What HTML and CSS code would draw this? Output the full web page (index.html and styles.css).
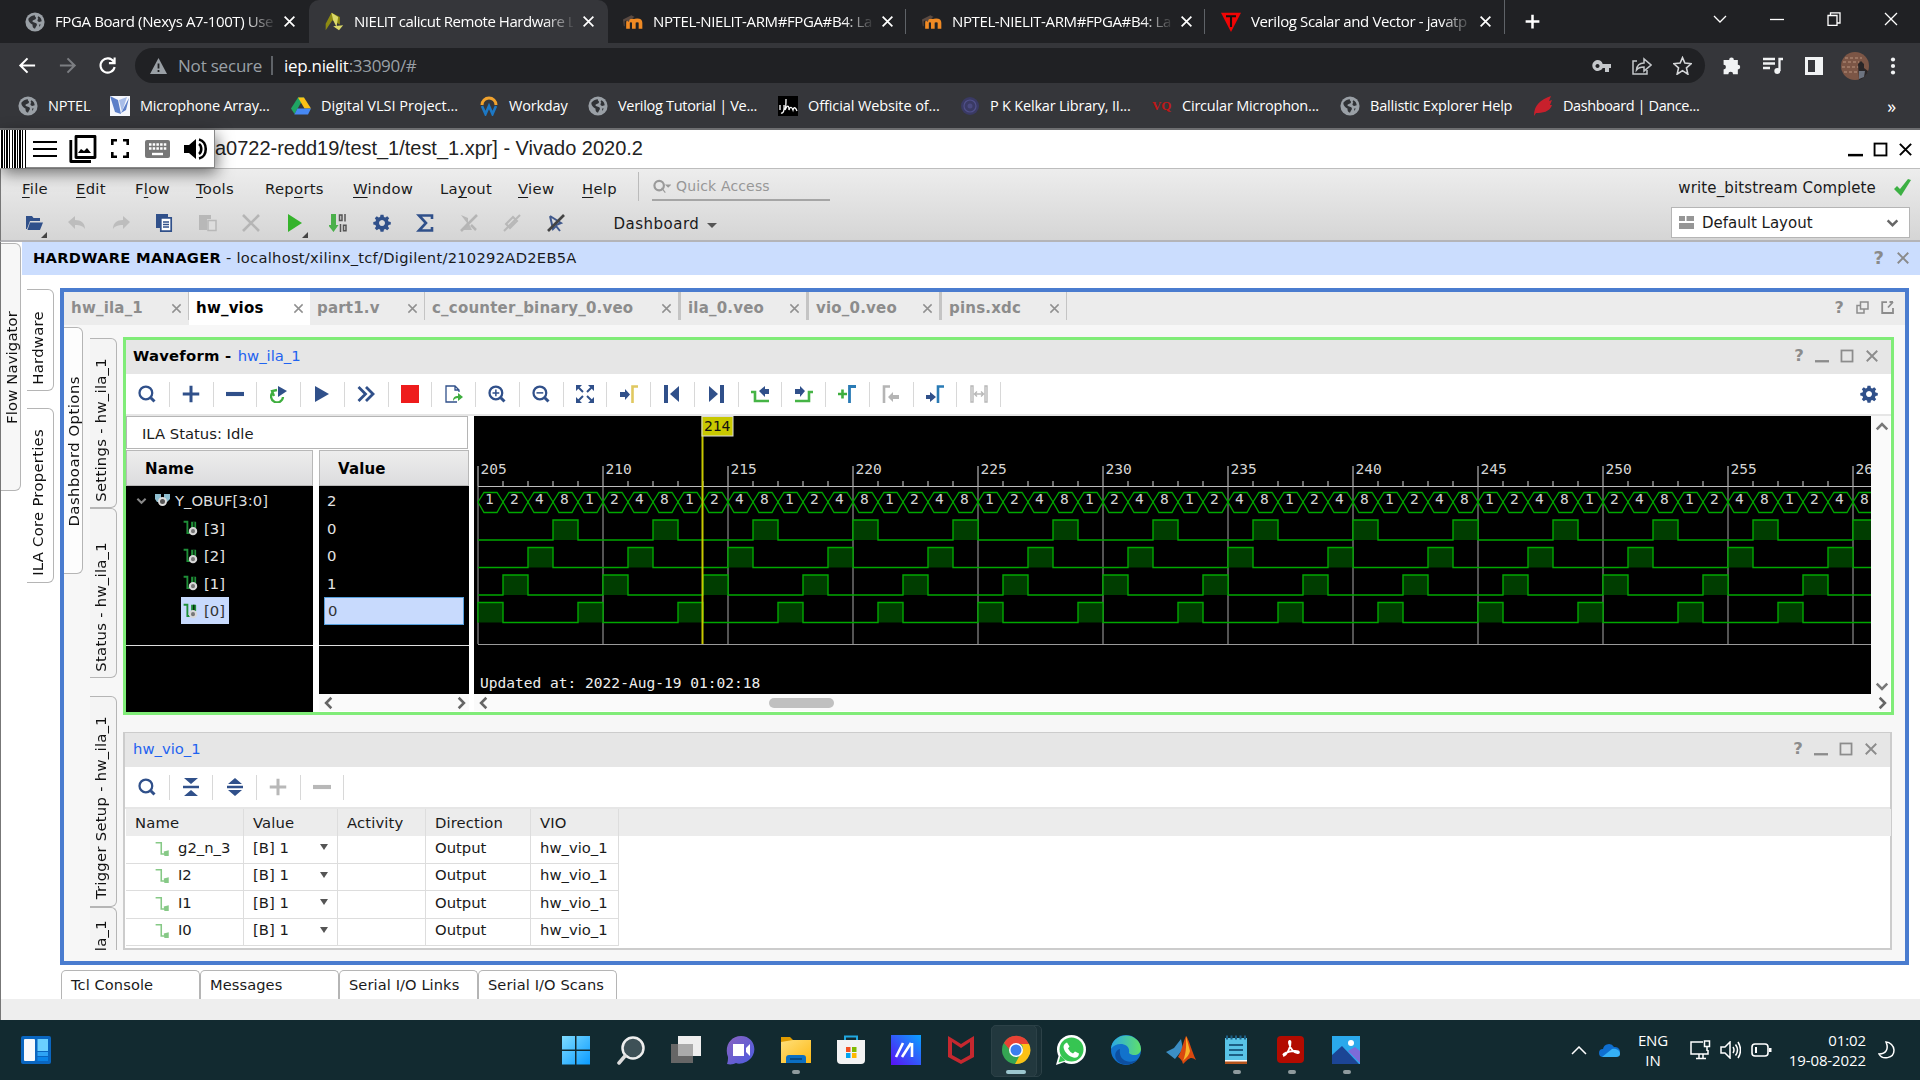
FILE: index.html
```html
<!DOCTYPE html>
<html lang="en">
<head>
<meta charset="utf-8">
<title>NIELIT calicut Remote Hardware Lab</title>
<link rel="stylesheet" href="styles.css">
</head>
<body>
<svg class="defs" width="0" height="0">
  <defs>
    <linearGradient id="g-win" x2="1" y2="1"><stop offset="0" stop-color="#7fdcff"/><stop offset="1" stop-color="#0a9bff"/></linearGradient>
    <linearGradient id="g-chat" x2="1" y2="1"><stop offset="0" stop-color="#8a63c0"/><stop offset="1" stop-color="#4a5be0"/></linearGradient>
    <linearGradient id="g-fold" x2="1" y2="1"><stop offset="0" stop-color="#ffe07a"/><stop offset="1" stop-color="#fdb813"/></linearGradient>
    <linearGradient id="g-asus" x1="1" x2="0" y2="1"><stop offset="0" stop-color="#0aa2ff"/><stop offset="1" stop-color="#5a10f5"/></linearGradient>
    <linearGradient id="g-edge" x2="1" y2="0"><stop offset="0" stop-color="#2aa8e8"/><stop offset="1" stop-color="#5fe06a"/></linearGradient>
    <symbol id="globe" viewBox="0 0 24 24"><circle cx="12" cy="12" r="11.5" fill="#9aa0a6"/><path d="M4 8c3-3 5-4 8-4-1 2 2 2 1 4s-4 1-4 3 4 1 5 3-1 3-2 6c-3-1-3-3-3-5-2-1-5-3-5-7zM16 5c3 1 4 4 4 6l-3 1c-2-1-3-2-1-4-1-1-1-2 0-3zM17 15l2 0-2 3z" fill="#303236"/></symbol>
    <symbol id="x" viewBox="0 0 24 24"><path d="M3 3l18 18M21 3L3 21" fill="none" stroke="currentColor" stroke-width="3.200"/></symbol>
    <symbol id="moodle" viewBox="0 0 24 24"><path d="M6 20v-7c0-4 7-4 7 0v7M13 13c0-4 8-4 8 0v7" fill="none" stroke="#f08a24" stroke-width="4.4"/><path d="M0 9l10-5 4 2-6 3-1 3-3-2-2 1v6H1z" fill="#5a4a42"/></symbol>
    <symbol id="gear" viewBox="0 0 24 24"><path fill-rule="evenodd" d="M10 1h4l.6 3 1.8.8L19 3l2.6 2.600-1.700 2.500.8 1.900 3 .6v3.400l-3 .6-.8 1.900 1.700 2.600L19 21.600l-2.600-1.700-1.800.8L14 23.500h-4l-.6-2.800-1.900-.8L5 21.600 2.400 19l1.700-2.500L3.300 14.600.4 14v-3.500l2.900-.6.8-1.900-1.700-2.500L5 3l2.500 1.700L9.400 4zM12 8a4 4 0 1 0 .01 0z" fill="#30508a"/></symbol>
    <symbol id="search" viewBox="0 0 24 24"><circle cx="10.500" cy="10.500" r="8.500" fill="none" stroke="#30508a" stroke-width="3"/><path d="M17 17l5 5" stroke="#30508a" stroke-width="4"/></symbol>
    <symbol id="plus" viewBox="0 0 24 24"><path d="M12 1v22M1 12h22" stroke="currentColor" stroke-width="4"/></symbol>
    <symbol id="minus" viewBox="0 0 24 24"><path d="M0 12h24" stroke="currentColor" stroke-width="5.500"/></symbol>
    <symbol id="chev" viewBox="0 0 24 24"><path d="M3 8l9 9 9-9" fill="none" stroke="currentColor" stroke-width="4.400"/></symbol>
    <symbol id="box" viewBox="0 0 24 24"><rect x="2.500" y="2.500" width="19" height="19" fill="none" stroke="currentColor" stroke-width="3"/></symbol>
    <symbol id="under" viewBox="0 0 24 24"><path d="M0 21h24" stroke="currentColor" stroke-width="4"/></symbol>
    <symbol id="net" viewBox="0 0 24 24"><path d="M1 2h6v18h4" fill="none" stroke="#1f8f38" stroke-width="3"/><path d="M13 2h8v10h-8z" fill="#1f8f38"/><path d="M16 2h2.500v10H16z" fill="#0a3312"/><circle cx="16" cy="17" r="5" fill="#777" stroke="#d8d8d8" stroke-width="3.500"/></symbol>
    <symbol id="out" viewBox="0 0 24 24"><path d="M1 2h9v18h6" fill="none" stroke="#86c986" stroke-width="2.500"/><path d="M14 16l8-2v9h-7z" fill="#86c986"/></symbol>
  </defs>
</svg>

<header class="chrome">
  <div class="tabs">
    <div class="tab"><svg class="fav"><use href="#globe"/></svg><span class="tt">FPGA Board (Nexys A7-100T) Use</span><svg class="tx"><use href="#x"/></svg></div>
    <div class="tab on"><svg class="fav" viewBox="0 0 24 24"><path d="M9 1l10 5v9l-9-5L2 22V14z" fill="#8d8a12"/><path d="M9 1l8 5-2 12-4-8zM11 17l12-1-5 6z" fill="#dbd96a"/></svg><span class="tt t2w">NIELIT calicut Remote Hardware L</span><svg class="tx"><use href="#x"/></svg></div>
    <div class="tab"><svg class="fav"><use href="#moodle"/></svg><span class="tt">NPTEL-NIELIT-ARM#FPGA#B4: La</span><svg class="tx"><use href="#x"/></svg></div>
    <div class="tab sep"><svg class="fav"><use href="#moodle"/></svg><span class="tt">NPTEL-NIELIT-ARM#FPGA#B4: La</span><svg class="tx"><use href="#x"/></svg></div>
    <div class="tab sep"><svg class="fav" viewBox="0 0 24 24"><path d="M0 1h24L12 24z" fill="#f00505"/><path d="M6 5h12M12 5v13" stroke="#111" stroke-width="2.500"/></svg><span class="tt">Verilog Scalar and Vector - javatp</span><svg class="tx"><use href="#x"/></svg></div>
    <div class="newtab"><svg width="15" height="15"><use href="#plus"/></svg></div>
    <div class="winbtns">
      <svg width="14" height="9" viewBox="0 0 14 9"><path d="M1 1l6 6 6-6"/></svg>
      <svg width="14" height="9" viewBox="0 0 14 9"><path d="M0 4.500h14"/></svg>
      <svg width="14" height="14" viewBox="0 0 14 14"><path d="M1 3.500h9v10h-9zM3.500 3V.8h9.500V11h-3"/></svg>
      <svg width="14" height="14" viewBox="0 0 14 14"><path d="M1 1l12 12M13 1L1 13"/></svg>
    </div>
  </div>
  <div class="nav">
    <div class="navl">
      <svg viewBox="0 0 20 20"><path d="M18 10H3M10 2.500L2.500 10l7.500 7.500" stroke="#fff"/></svg>
      <svg viewBox="0 0 20 20"><path d="M2 10h15M10 2.500l7.500 7.500-7.500 7.500" stroke="#7c7e82"/></svg>
      <svg viewBox="0 0 20 20"><path d="M16.500 6A7.500 7.500 0 1 0 17.500 11.500M17.500 1.500v6h-6" stroke="#fff"/></svg>
    </div>
    <div class="pill">
      <svg width="17" height="16" viewBox="0 0 17 16"><path d="M8.500 0L17 16H0z" fill="#9aa0a6"/><path d="M8.500 5.500v5M8.500 12v2" stroke="#202124" stroke-width="1.800"/></svg>
      <span class="ns">Not secure</span><i></i><span class="url"><b>iep.nielit</b>:33090/#</span>
      <div class="pr">
        <svg width="19" height="12" viewBox="0 0 19 12"><path fill-rule="evenodd" d="M5.500 0a5.500 5.500 0 0 1 5.200 4H19v4h-2v4h-4V8h-2.300A5.500 5.500 0 1 1 5.500 0zm0 4a2 2 0 1 0 .01 0z" fill="#c4c7ca"/></svg>
        <svg width="20" height="18" viewBox="0 0 20 18"><path d="M5 4H1v13h14v-4M4.500 13C5 8 8 6 12 6V2l7 6-7 6v-4c-4 0-6 1-7.500 3z" fill="none" stroke="#c4c7ca" stroke-width="1.500"/></svg>
        <svg width="19" height="19" viewBox="0 0 24 24"><path d="M12 2l3 7 8 .8-6 5.200 1.800 8L12 18.500 5.200 23 7 15 1 9.800 9 9z" fill="none" stroke="#d4d6d8" stroke-width="2"/></svg>
      </div>
    </div>
    <div class="navr">
      <svg width="19" height="19" viewBox="0 0 24 24"><path d="M9 5a3 3 0 0 1 6 0h5v6a3 3 0 0 1 0 6v6h-6a3 3 0 0 0-6 0H2v-6a3 3 0 0 0 0-6V5z" fill="#f1f3f4"/></svg>
      <svg width="20" height="18" viewBox="0 0 20 18"><path d="M0 2h12M0 6.500h12M0 11h7M16.500 14V2h3.500" fill="none" stroke="#f1f3f4" stroke-width="2.300"/><circle cx="14.300" cy="14" r="3" fill="#f1f3f4"/></svg>
      <svg width="18" height="18" viewBox="0 0 18 18"><path d="M0 0h18v18H0zM3 3v12h7V3z" fill-rule="evenodd" fill="#f1f3f4"/></svg>
      <svg width="28" height="28" viewBox="0 0 28 28"><circle cx="14" cy="14" r="14" fill="#7c5646"/><path d="M2 10h16M1 15h17M3 20h13M4 6h17" stroke="#a5806c" stroke-width="1.500" stroke-dasharray="3 2"/><path d="M17 12l3-3 3 3v4l4 3c-1 4-5 8-9 9z" fill="#2a2627"/><path d="M18 19h6l-1 6-5 2z" fill="#6d7480"/></svg>
      <svg width="6" height="18" viewBox="0 0 6 18"><g fill="#f1f3f4"><circle cx="3" cy="2.500" r="2.100"/><circle cx="3" cy="9" r="2.100"/><circle cx="3" cy="15.500" r="2.100"/></g></svg>
    </div>
  </div>
  <div class="marks">
    <div class="m m1"><svg><use href="#globe"/></svg>NPTEL</div>
    <div class="m m2"><svg viewBox="0 0 20 20"><path d="M0 0h20v20H0z" fill="#f4f6fb"/><path d="M0 0l8 4 3 14-6-2zM11 17l8-15-3 12z" fill="#5c7fc8"/><path d="M9 4l8-3-5 15z" fill="#a8bde8"/></svg>Microphone Array...</div>
    <div class="m m3"><svg viewBox="0 0 20 20"><path d="M7 1.500h6L7 12l-3.500 6L0 12.500z" fill="#1fa463"/><path d="M7 1.500h6l7 11h-6.500z" fill="#fbc116"/><path d="M6.500 12.500H20L17 18.500H3.300z" fill="#4688f4"/></svg>Digital VLSI Project...</div>
    <div class="m m4"><svg viewBox="0 0 20 20"><path d="M3 9a7 7 0 0 1 14 0" fill="none" stroke="#f0a22e" stroke-width="3"/><path d="M3 10l3.500 8L10 10l3.500 8L17 10" fill="none" stroke="#1d78c4" stroke-width="2.600"/></svg>Workday</div>
    <div class="m m5"><svg><use href="#globe"/></svg>Verilog Tutorial | Ve...</div>
    <div class="m m6"><svg viewBox="0 0 20 20"><path d="M0 0h20v20H0z" fill="#000"/><path d="M2 9v5M3 17c4 1 3-8 3-8M8 3c0 6 0 9-1 11 3-6 4-4 4 0 1-4 3-3 4 0 1-4 3-2 4 1" fill="none" stroke="#fff" stroke-width="1.300"/></svg>Official Website of...</div>
    <div class="m m7"><svg viewBox="0 0 20 20"><circle cx="10" cy="10" r="9" fill="#3a3a64"/><circle cx="10" cy="10" r="6" fill="none" stroke="#50508a" stroke-width="1.200"/><circle cx="10" cy="10" r="2.500" fill="#4a4a80"/></svg>P K Kelkar Library, II...</div>
    <div class="m m8"><span class="vq">VQ</span>Circular Microphon...</div>
    <div class="m m9"><svg><use href="#globe"/></svg>Ballistic Explorer Help</div>
    <div class="m m10"><svg viewBox="0 0 20 20"><path d="M1 20C1 9 7 4 18 0l-2 5 3-1-2 5 2 0c-2 7-10 8-16 8z" fill="#c8202c"/></svg>Dashboard | Dance...</div>
    <div class="more">»</div>
  </div>
</header>

<div class="vtitle">
  <div class="remote">
    <div class="grip"></div>
    <svg class="r1" width="24" height="18" viewBox="0 0 24 18"><path d="M0 2h24M0 9h24M0 16h24" stroke="#000" stroke-width="2.200"/></svg>
    <svg class="r2" width="28" height="28" viewBox="0 0 28 28"><path d="M7 1.500h19v21H7zM1.800 5v21.500H22" fill="none" stroke="#000" stroke-width="2.800" stroke-linejoin="round"/><path d="M9 18l3-4 3 2 3-3 4 5z"/></svg>
    <svg class="r3" width="18" height="19" viewBox="0 0 18 19"><path d="M1.300 6V1.300H6M12 1.300h4.700V6M16.700 13v4.700H12M6 17.700H1.300V13" fill="none" stroke="#000" stroke-width="2.600"/></svg>
    <svg class="r4" width="25" height="18" viewBox="0 0 25 18"><rect width="25" height="18" rx="2" fill="#777"/><path d="M4 4.500h18M4 8.500h18" stroke="#fff" stroke-width="2.400" stroke-dasharray="2.500 1.200"/><path d="M7 14h11" stroke="#fff" stroke-width="2.400"/></svg>
    <svg class="r5" width="24" height="22" viewBox="0 0 24 22"><path d="M0 7h5l7-6v20l-7-6H0z"/><path d="M15 6c3 2 3 8 0 10M15 1.500c9 2 9 17 0 19" fill="none" stroke="#000" stroke-width="2.600"/></svg>
  </div>
  <span class="vt">a0722-redd19/test_1/test_1.xpr] - Vivado 2020.2</span>
  <div class="vwin"><svg><use href="#under"/></svg><svg><use href="#box"/></svg><svg><use href="#x"/></svg></div>
</div>

<div class="vhead">
  <div class="vleft">
    <div class="menu">
      <span class="i1"><u>F</u>ile</span><span class="i2"><u>E</u>dit</span><span class="i3">F<u>l</u>ow</span><span class="i4"><u>T</u>ools</span><span class="i5">Rep<u>o</u>rts</span><span class="i6"><u>W</u>indow</span><span class="i7">La<u>y</u>out</span><span class="i8"><u>V</u>iew</span><span class="i9"><u>H</u>elp</span>
      <div class="quick"><svg width="18" height="15" viewBox="0 0 19 15"><circle cx="6.500" cy="6.500" r="5" fill="none" stroke="#9a9a9a" stroke-width="2.300"/><path d="M9 9l4 5M14 6h4l-2 2z" fill="#9a9a9a" stroke="#9a9a9a" stroke-width="1.200"/></svg>Quick Access</div>
    </div>
    <div class="tools">
      <i><svg viewBox="0 0 18 18"><path d="M1 2h6l1.500 2H15v3H5L2 15H1z" fill="#30508a"/><path d="M5 8.500h13L15 16H2.500z" fill="#30508a"/></svg><b class="cor"></b></i>
      <i><svg viewBox="0 0 18 18"><path d="M0 8l7-6v4c6 0 10 3 10 9-2-3-5-4-10-4v4z" fill="#bdbdbd"/></svg></i>
      <i><svg viewBox="0 0 18 18"><path d="M18 8l-7-6v4C5 6 1 9 1 15c2-3 5-4 10-4v4z" fill="#bdbdbd"/></svg></i>
      <i><svg viewBox="0 0 18 18"><path d="M1 0h12v3H5v11H1z" fill="#30508a"/><path d="M5.800 3.800h10.400v13.400H5.800z" fill="#fff" stroke="#30508a" stroke-width="1.700"/><path d="M8 8h6M8 10.500h6M8 13h6" stroke="#30508a" stroke-width="1.400"/></svg></i>
      <i><svg viewBox="0 0 18 18"><path d="M0 1h12v4H8v11H0z" fill="#b8b8b8"/><path d="M9 6.500h8v10H9z" fill="#ddd" stroke="#b8b8b8" stroke-width="1.500"/></svg></i>
      <i><svg viewBox="0 0 18 18"><path d="M1 1l16 16M17 1L1 17" stroke="#b5b5b5" stroke-width="2.600"/></svg></i>
      <i><svg viewBox="0 0 18 18"><path d="M2 0l14 9L2 18z" fill="#35b32c"/></svg><b class="cor"></b></i>
      <i><svg viewBox="0 0 18 18"><path d="M2 0h5v11h2.500L4.500 18-1 11h3z" fill="#4ab04a"/><path d="M10.500 1h2.500v5.500h-2.500zM16 0v7.500M11.500 10v8M14.500 11.200h2.500v5.500h-2.500z" fill="none" stroke="#555" stroke-width="1.500"/></svg></i>
      <i><svg><use href="#gear"/></svg></i>
      <i><svg viewBox="0 0 18 18"><path d="M16 5V1.500H3L10 9l-7 7.500h13V13" fill="none" stroke="#30508a" stroke-width="2.600"/></svg></i>
      <i><svg viewBox="0 0 18 18"><path d="M1 1l7 3v4l4 8H1l6-7z" fill="#b8b8b8"/><path d="M17 1L1 17" stroke="#b5b5b5" stroke-width="2.500"/><path d="M11 11l5 5" stroke="#b5b5b5" stroke-width="2.500"/></svg></i>
      <i><svg viewBox="0 0 18 18"><path d="M3 10l7-7 4 4-7 7zM17 1L1 17" stroke="#b8b8b8" stroke-width="2" fill="none"/></svg></i>
      <i><svg viewBox="0 0 18 18"><path d="M3 2l3 13 3-3 4 5M3 2l11 7-5 2" stroke="#41598c" stroke-width="2" fill="none"/><path d="M17 1L1 17" stroke="#444" stroke-width="2.600"/></svg></i>
      <span class="dash">Dashboard</span><b class="dn"></b>
    </div>
  </div>
  <div class="vright">
    <div class="stat">write_bitstream Complete<svg width="17" height="17" viewBox="0 0 17 17"><path d="M0 10l3-3 3 3 8-10 3 1L7 17z" fill="#3cb043"/></svg></div>
    <div class="sel"><svg width="15" height="13" viewBox="0 0 15 13"><path d="M0 0h6v5H0zM7.500 0H15v5H7.500zM0 7h15v6H0z" fill="#969696"/></svg><span>Default Layout</span><svg class="sc" width="13" height="13"><use href="#chev"/></svg></div>
  </div>
</div>

<main class="body">
  <aside class="c1"><div class="vtab flow"><span>Flow Navigator</span></div></aside>
  <section class="c2">
    <div class="hm"><b>HARDWARE MANAGER</b><span>&nbsp;- localhost/xilinx_tcf/Digilent/210292AD2EB5A</span><div class="hmr"><b>?</b><svg><use href="#x"/></svg></div></div>
    <div class="hmbody">
      <div class="side"><div class="vtab hw"><span>Hardware</span></div><div class="vtab icp"><span>ILA Core Properties</span></div></div>
      <div class="mainc">
        <div class="frame">
          <div class="etabs">
            <div class="e1">hw_ila_1<svg><use href="#x"/></svg></div><div class="cur">hw_vios<svg><use href="#x"/></svg></div><div class="e3">part1.v<svg><use href="#x"/></svg></div><div class="e4 thick">c_counter_binary_0.veo<svg><use href="#x"/></svg></div><div class="e5 thick">ila_0.veo<svg><use href="#x"/></svg></div><div class="e6 thick">vio_0.veo<svg><use href="#x"/></svg></div><div class="e7">pins.xdc<svg><use href="#x"/></svg></div>
            <aside><b>?</b><svg viewBox="0 0 13 13"><path d="M4.500 1h7.500v7H4.500zM4 4.500H1V12h7V8.500" fill="none" stroke="#8c8c8c" stroke-width="1.500"/></svg><svg viewBox="0 0 13 13"><path d="M6 1.200H1.200V12H12V7M7 6.500L12 1M8.500 1H12" fill="none" stroke="#8c8c8c" stroke-width="1.800"/></svg></aside>
          </div>
          <div class="fbody">
            <div class="do"><div class="vtab dopt"><span>Dashboard Options</span></div></div>
            <div class="side2"><div class="vtab s1"><span>Settings - hw_ila_1</span></div><div class="vtab s2"><span>Status - hw_ila_1</span></div><div class="vtab s3"><span>Trigger Setup - hw_ila_1</span></div><div class="vtab s4"><span>la_1</span></div></div>
            <div class="panels">
              <div class="wf">
                <div class="ph"><b>Waveform - </b><a>hw_ila_1</a><aside><b>?</b><svg><use href="#under"/></svg><svg><use href="#box"/></svg><svg><use href="#x"/></svg></aside></div>
                <div class="pt">
                  <i><svg><use href="#search"/></svg></i>
                  <i><svg><use href="#plus"/></svg></i>
                  <i><svg><use href="#minus"/></svg></i>
                  <i><svg viewBox="0 0 18 18"><path d="M3 7a6 6 0 1 0 10 5M7 5l-5 1 2 5" fill="none" stroke="#3fae3f" stroke-width="2.300"/><path d="M8 1l9 5-9 6z" fill="#30508a"/></svg></i>
                  <i><svg viewBox="0 0 18 18"><path d="M2 1l14 8-14 8z" fill="#30508a"/></svg></i>
                  <i><svg viewBox="0 0 18 18"><path d="M1.500 2l7 7-7 7M9 2l7 7-7 7" fill="none" stroke="#30508a" stroke-width="2.800"/></svg></i>
                  <i><svg viewBox="0 0 18 18"><path d="M0 0h18v18H0z" fill="#ee1c1c"/></svg></i>
                  <i><svg viewBox="0 0 18 18"><path d="M14 7V5l-4-4H1v16h11M10 1v4h4" fill="none" stroke="#30508a" stroke-width="1.300"/><path d="M8 16c0-4 2-5 5-5V8l5 4-5 4v-3c-2 0-4 1-5 3z" fill="#3fae3f"/></svg></i>
                  <i><svg viewBox="0 0 24 24"><use href="#search"/><path d="M10.500 6v9M6 10.500h9" stroke="#30508a" stroke-width="2"/></svg></i>
                  <i><svg viewBox="0 0 24 24"><use href="#search"/><path d="M6 10.500h9" stroke="#30508a" stroke-width="2"/></svg></i>
                  <i><svg viewBox="0 0 18 18"><path d="M0 0h6L0 6zM18 0v6l-6-6zM18 18h-6l6-6zM0 18v-6l6 6z" fill="#30508a"/><path d="M2 2l5 5M16 2l-5 5M16 16l-5-5M2 16l5-5" stroke="#30508a" stroke-width="2"/></svg></i>
                  <i><svg viewBox="0 0 18 18"><path d="M0 7h5V4l5 5.500L5 15v-3H0z" fill="#30508a"/><path d="M12.500 18V1.500H18" fill="none" stroke="#e0c860" stroke-width="2.600"/></svg></i>
                  <i><svg viewBox="0 0 18 18"><path d="M1 0h4v18H1zM16 1v16L7 9z" fill="#30508a"/></svg></i>
                  <i><svg viewBox="0 0 18 18"><path d="M13 0h4v18h-4zM2 1v16l9-8z" fill="#30508a"/></svg></i>
                  <i><svg viewBox="0 0 18 18"><path d="M0 7h4v9h14" fill="none" stroke="#46b446" stroke-width="2.600"/><path d="M8 6l6-5v3h4v5h-4v3z" fill="#30508a"/></svg></i>
                  <i><svg viewBox="0 0 18 18"><path d="M18 7h-4v9H0" fill="none" stroke="#46b446" stroke-width="2.600"/><path d="M10 6L5 1v3H0v5h5v3z" fill="#30508a"/></svg></i>
                  <i><svg viewBox="0 0 18 18"><path d="M0 9h9M4.500 4.500v9" stroke="#3fae3f" stroke-width="2.600"/><path d="M11.500 18V1.500H18" fill="none" stroke="#2a7bb5" stroke-width="2.800"/></svg></i>
                  <i><svg viewBox="0 0 18 18"><path d="M2 18V1.500h6" fill="none" stroke="#b5b5b5" stroke-width="2.600"/><path d="M6 12l5-5v3h6v4h-6v3z" fill="#b5b5b5"/></svg></i>
                  <i><svg viewBox="0 0 18 18"><path d="M0 10h4V7l6 5-6 5v-3H0z" fill="#30508a"/><path d="M12 18V1.500h6" fill="none" stroke="#2a7bb5" stroke-width="2.600"/></svg></i>
                  <i><svg viewBox="0 0 18 18"><path d="M1 1h2v16H1zM15 1h2v16h-2zM5 9h8M7 6.500L4.500 9 7 11.500M11 6.500L13.500 9 11 11.500" fill="none" stroke="#b8b8b8" stroke-width="1.400"/></svg></i>
                  <svg class="pgear"><use href="#gear"/></svg>
                </div>
                <div class="wbody">
                  <div class="wleft">
                    <div class="ila">ILA Status: Idle</div>
                    <div class="cols">
                      <div class="ncol">
                        <div class="ch">Name</div>
                        <div class="blk nm">
                          <div class="r top"><svg class="ex" width="11" height="11"><use href="#chev"/></svg><svg class="bi" viewBox="0 0 15 13"><path d="M0 0h6v8H2L0 5zM9 0h6v5l-3 3H9z" fill="#8fbfd0"/><circle cx="7.500" cy="7.500" r="3.500" fill="#555" stroke="#ddd" stroke-width="2"/></svg>Y_OBUF[3:0]</div>
                          <div class="r"><p><svg><use href="#net"/></svg>[3]</p></div>
                          <div class="r"><p><svg><use href="#net"/></svg>[2]</p></div>
                          <div class="r"><p><svg><use href="#net"/></svg>[1]</p></div>
                          <div class="r"><p class="hl"><svg><use href="#net"/></svg>[0]</p></div>
                          <hr>
                        </div>
                      </div>
                      <div class="vcol">
                        <div class="ch">Value</div>
                        <div class="blk"><div class="r">2</div><div class="r">0</div><div class="r">0</div><div class="r">1</div><div class="r hl">0</div><hr></div>
                        <div class="hs"><svg class="l"><use href="#chev"/></svg><svg class="rt"><use href="#chev"/></svg></div>
                      </div>
                    </div>
                  </div>
                  <div class="wright">
                    <div class="wtop"><svg id="wave" width="1397" height="278"></svg><div class="vs"><svg class="up"><use href="#chev"/></svg><svg><use href="#chev"/></svg></div></div>
                    <div class="hs"><svg class="l"><use href="#chev"/></svg><b class="thumb"></b><svg class="rt"><use href="#chev"/></svg></div>
                  </div>
                </div>
              </div>
              <div class="vio">
                <div class="ph"><a>hw_vio_1</a><aside><b>?</b><svg><use href="#under"/></svg><svg><use href="#box"/></svg><svg><use href="#x"/></svg></aside></div>
                <div class="pt">
                  <i><svg><use href="#search"/></svg></i>
                  <i><svg viewBox="0 0 18 18"><path d="M2 0h14L9 6zM2 18h14l-7-6zM1 7.700h16v2.600H1z" fill="#30508a"/></svg></i>
                  <i><svg viewBox="0 0 18 18"><path d="M2 6h14L9 0zM2 12h14l-7 6zM1 7.700h16v2.600H1z" fill="#30508a"/></svg></i>
                  <i class="off"><svg><use href="#plus"/></svg></i>
                  <i class="off"><svg><use href="#minus"/></svg></i>
                </div>
                <div class="tb">
                  <div class="tr th"><span>Name</span><span>Value</span><span>Activity</span><span>Direction</span><span>VIO</span></div>
                  <div class="tr"><span><svg><use href="#out"/></svg>g2_n_3</span><span>[B] 1<b class="dd"></b></span><span></span><span>Output</span><span>hw_vio_1</span></div>
                  <div class="tr"><span><svg><use href="#out"/></svg>I2</span><span>[B] 1<b class="dd"></b></span><span></span><span>Output</span><span>hw_vio_1</span></div>
                  <div class="tr"><span><svg><use href="#out"/></svg>I1</span><span>[B] 1<b class="dd"></b></span><span></span><span>Output</span><span>hw_vio_1</span></div>
                  <div class="tr"><span><svg><use href="#out"/></svg>I0</span><span>[B] 1<b class="dd"></b></span><span></span><span>Output</span><span>hw_vio_1</span></div>
                </div>
              </div>
            </div>
          </div>
        </div>
        <div class="btabs"><span>Tcl Console</span><span>Messages</span><span>Serial I/O Links</span><span>Serial I/O Scans</span></div>
      </div>
    </div>
  </section>
</main>
<div class="foot"></div>

<footer class="task">
  <div class="wid"><svg width="30" height="28" viewBox="0 0 30 28"><rect width="30" height="28" rx="2" fill="#0a66c0"/><rect x="3" y="3" width="11" height="22" rx="1" fill="#f6f9fc"/><path d="M16.500 3H27v12H16.500z" fill="#6bd0ff"/><path d="M16.500 16H27v4H16.500z" fill="#2fa4f5"/><path d="M16.500 21H27v4H16.500z" fill="#0a84e8"/></svg></div>
  <div class="apps">
    <i><svg viewBox="0 0 30 30"><path d="M1 1h13v13.500H1zM15.500 1H29v13.500H15.500zM1 16h13v13.500H1zM15.500 16H29v13.500H15.500z" fill="url(#g-win)"/></svg></i>
    <i><svg viewBox="0 0 30 30"><circle cx="17" cy="13" r="10.500" fill="#3e5157" stroke="#eee" stroke-width="2.500"/><path d="M9 21l-6 7" stroke="#ddd" stroke-width="3.500" stroke-linecap="round"/></svg></i>
    <i><svg viewBox="0 0 30 30"><path d="M0 9h22v19H0z" fill="#666"/><path d="M7 1h23v20H7z" fill="#eee"/><path d="M7 9h15v12H7z" fill="#aaa"/></svg></i>
    <i><svg viewBox="0 0 30 30"><path d="M1 29c1-3 1-5 1-7C-2 12 4 1 15 1s16 11 12 19-14 10-17 8c-2 1-5 2-9 1z" fill="url(#g-chat)"/><path d="M7 9h11v12H7zM20 13l4-4v12l-4-4z" fill="#fff"/></svg></i>
    <i><svg viewBox="0 0 30 30"><path d="M0 2h9l3 3v4H0z" fill="#e09b00"/><path d="M0 7l12-2h18v23H0z" fill="url(#g-fold)"/><path d="M5 28v-5q0-3 3-3h14q3 0 3 3v5z" fill="#0b6fc2"/><path d="M9 24h12" stroke="#043f73" stroke-width="1.500"/></svg><b></b></i>
    <i><svg viewBox="0 0 30 30"><path d="M9 6V1.500h12V6" fill="none" stroke="#20a8e0" stroke-width="2"/><path d="M1 5h28v20q0 4-4 4H5q-4 0-4-4z" fill="#f3f3f3"/><path d="M10 12h4.500v5H10z" fill="#f25022"/><path d="M16 12h4.500v5H16z" fill="#7fba00"/><path d="M10 18h4.500v5H10z" fill="#00a4ef"/><path d="M16 18h4.500v5H16z" fill="#ffb900"/></svg></i>
    <i><svg viewBox="0 0 30 30"><path d="M0 0h30v30H0z" fill="url(#g-asus)"/><path d="M5 22l7-14M11 22l9-14M21 8v14" stroke="#fff" stroke-width="2.600"/></svg></i>
    <i><svg viewBox="0 0 30 30"><path d="M2 1l5 3 8 5 8-5 5-3v21l-13 7L2 22zM6 7v13l9 5 9-5V7l-9 6z" fill="#c5282f" fill-rule="evenodd"/></svg></i>
    <i class="act"><svg viewBox="0 0 30 30"><circle cx="15" cy="15" r="14" fill="#35a553"/><path d="M3 8a14 14 0 0 1 25 1H15a6 6 0 0 0-6 6z" fill="#e94235"/><path d="M28 9a14 14 0 0 1-14 20l6-11a6 6 0 0 0 0-9z" fill="#fbc116"/><circle cx="15" cy="15" r="7" fill="#fff"/><circle cx="15" cy="15" r="5.500" fill="#3b7ded"/></svg><b></b></i>
    <i><svg viewBox="0 0 30 30"><circle cx="15.500" cy="14.500" r="14.500" fill="#fff"/><path d="M0 30l2.500-9 6 6z" fill="#fff"/><circle cx="15.500" cy="14.500" r="12" fill="#36c552"/><path d="M2.500 27.500l2-7 5 5z" fill="#36c552"/><path d="M11 7.500l2.500 4-1.500 2q2 4 5 5l2-2 4 2c0 4-4 5-7 3.500-5-2-8-6-8.500-10 0-2 1.500-4 3.500-4.500z" fill="#fff"/></svg></i>
    <i><svg viewBox="0 0 30 30"><circle cx="15" cy="15" r="15" fill="#1272cc"/><path d="M0 14C1-4 29-4 30 14c0 6-8 8-12 4 2-10-13-12-18-4z" fill="url(#g-edge)"/><path d="M9 14c-2 12 10 16 18 10-6 8-18 7-22 0-2-5 0-9 4-10z" fill="#0d4fa0"/></svg></i>
    <i><svg viewBox="0 0 30 30"><path d="M0 17l8-4 7-9 2 10-8 10z" fill="#3b8ec4"/><path d="M20 1c3 3 6 16 10 24-5-4-7-2-13 4-1-4-3-6-5-7 4-6 5-15 8-21z" fill="#d9480f"/><path d="M20 1c0 8 1 15-3 25 5-5 6-6 7-10z" fill="#f7b32b"/></svg></i>
    <i><svg viewBox="0 0 30 30"><path d="M4 3h22v23H4z" fill="#59c3e6"/><path d="M4 26h22v3H4z" fill="#b5541c"/><path d="M4 25h22v1.500H4z" fill="#fff"/><path d="M8 10h14M8 15h14M8 20h14" stroke="#1d5f85" stroke-width="2"/><path d="M5 2.500h20" stroke="#1d5f85" stroke-width="4" stroke-dasharray="2 2.500"/></svg><b></b></i>
    <i><svg viewBox="0 0 30 30"><rect x="1" y="1" width="27" height="27" rx="4" fill="#b30b00"/><path d="M7 21c4-1 8-9 7.500-14-.5-2-2-1-1.500 1 1 6 6 11 9.500 10 1.500-1-1-2.500-5-2S8 18 7 20" fill="none" stroke="#fff" stroke-width="1.800"/></svg><b></b></i>
    <i><svg viewBox="0 0 30 30"><path d="M1 1h28v28H1z" fill="#2aa9ec"/><path d="M17 16l12 12V16l-5-4z" fill="#7e6bd8"/><path d="M1 20l10-9 17 18H1z" fill="#1c4595"/><circle cx="20" cy="8" r="3" fill="#fff"/></svg><b></b></i>
  </div>
  <div class="tray">
    <svg class="t1" width="16" height="9" viewBox="0 0 16 9"><path d="M1 8l7-7 7 7" fill="none" stroke="#fff" stroke-width="1.500"/></svg>
    <svg class="t2" width="21" height="14" viewBox="0 0 21 14"><path d="M4 14a4 4 0 0 1 0-8A6 6 0 0 1 15 4a5 5 0 0 1 2 10z" fill="#0f6fd0"/><path d="M3 14l10-8c5-1 8 2 8 5q0 3-4 3z" fill="#35b0f5"/></svg>
    <div class="lang">ENG<br>IN</div>
    <svg class="t3" width="21" height="20" viewBox="0 0 21 20"><path d="M13 2H1v12h17v-4M6 18.500h10M9 14v4M13 14v4M14.500 1h5v5.500h-5zM17 7v4" fill="none" stroke="#fff" stroke-width="1.500"/></svg>
    <svg class="t4" width="21" height="18" viewBox="0 0 21 18"><path d="M1 6h4l5-5v16l-5-5H1zM13 6q2 3 0 6M15.500 3.500q4 5.500 0 11M18 1q5 8 0 16" fill="none" stroke="#fff" stroke-width="1.500"/></svg>
    <svg class="t5" width="21" height="14" viewBox="0 0 21 14"><rect x="1" y="1" width="16" height="12" rx="3" fill="none" stroke="#fff" stroke-width="1.600"/><path d="M4 4h2v6H4zM18 5h2.500v4H18z" fill="#fff"/></svg>
    <div class="clock">01:02<br>19-08-2022</div>
    <svg class="t6" width="17" height="18" viewBox="0 0 17 18"><path d="M8 1c3 7 0 12-7 12 3 6 15 5 15-4 0-4-4-8-8-8z" fill="none" stroke="#fff" stroke-width="1.500"/></svg>
  </div>
</footer>
<script src="wave.js"></script>
</body>
</html>
```

FILE: styles.css
```css
* { box-sizing: border-box; }
body { margin: 0; width: 1920px; height: 1080px; overflow: hidden; background: #fff; font-family: "DejaVu Sans", sans-serif; font-size: 15px; color: #1a1a1a; display: flex; flex-direction: column; }
svg { flex: none; display: block; }
.defs { position: absolute; }

/* Browser chrome */
.chrome { height: 130px; background: #35363a; color: #fff; font-family: "Open Sans", sans-serif; font-size: 15px; border-bottom: 2px solid #6d6e70; flex: none; }
.tabs { height: 43px; background: #202124; display: flex; padding-left: 10px; }
.tab { width: 299px; height: 43px; padding-left: 15px; display: flex; align-items: center; position: relative; border-radius: 10px 10px 0 0; }
.tab.on { background: #35363a; }
.tab.sep::before { content: ""; position: absolute; left: -2px; top: 9px; height: 25px; width: 1px; background: #5f6368; }
.fav { width: 20px; height: 20px; }
.tt { margin-left: 10px; width: 219px; white-space: nowrap; padding-bottom: 1px; letter-spacing: -.38px; -webkit-mask-image: linear-gradient(90deg, #000 190px, transparent 222px); }
.t2w { letter-spacing: -.46px; }
.tx { width: 13px; height: 13px; margin-left: 9px; }
.newtab { width: 54px; padding: 14px 0 0 20px; border-left: 1px solid #5f6368; margin: 0 0 0 -1px; height: 34px; }
.winbtns { margin-left: auto; display: flex; align-items: center; gap: 43px; padding: 0 22px 5px 0; }
.winbtns path { fill: none; stroke: #fff; stroke-width: 1.3; }
.nav { height: 45px; display: flex; align-items: center; }
.navl { width: 135px; padding-left: 18px; display: flex; gap: 21px; }
.navl svg { width: 19px; height: 19px; }
.navl path { fill: none; stroke-width: 2.2; }
.pill { width: 1570px; height: 35px; border-radius: 18px; background: #202124; display: flex; align-items: center; padding-left: 15px; font-size: 17px; color: #9aa0a6; }
.pill i { width: 2px; height: 19px; background: #5f6368; margin: 0 11px 0 9px; }
.pill b { font-weight: 400; color: #fff; }
.ns { margin-left: 11px; width: 84px; white-space: nowrap; letter-spacing: -.2px; }
.url { letter-spacing: -.3px; }
.pr { margin-left: auto; display: flex; align-items: center; gap: 21px; padding-right: 13px; }
.navr { display: flex; align-items: center; padding-left: 17px; }
.navr svg { margin-right: 22px; }
.navr svg:nth-child(3) { margin-right: 18px; }
.navr svg:nth-child(4) { margin-right: 21px; }
.marks { height: 40px; display: flex; align-items: center; padding: 0 0 5px 18px; font-size: 14.5px; letter-spacing: -.2px; white-space: nowrap; }
.m { display: flex; align-items: center; gap: 10px; }
.m svg { width: 20px; height: 20px; }
.m1 { width: 92px; } .m2 { width: 181px; } .m3 { width: 188px; letter-spacing: 0; } .m4 { width: 109px; } .m5 { width: 190px; letter-spacing: -.3px; }
.m6 { width: 182px; letter-spacing: -.1px; } .m7 { width: 192px; } .m8 { width: 188px; } .m9 { width: 193px; }
.m10 { letter-spacing: -.4px; }
.vq { font: bold 13px "Liberation Serif", serif; color: #c01818; width: 20px; }
.more { margin-left: auto; margin-right: 24px; font-size: 18px; }

/* Vivado title bar */
.vtitle { height: 39px; flex: none; display: flex; align-items: center; background: #fff; border-bottom: 1px solid #bdbdbd; }
.remote { position: relative; z-index: 2; width: 215px; height: 38px; display: flex; align-items: center; background: #fff; border: solid #888; border-width: 0 1px 1px 0; box-shadow: 2px 5px 16px rgba(0,0,0,.55); }
.grip { width: 26px; height: 38px; background: repeating-linear-gradient(90deg, #fff 0 1.3px, #000 1.3px 2.6px); }
.r1 { margin-left: 7px; } .r2 { margin-left: 12px; } .r3 { margin-left: 14px; } .r4 { margin-left: 16px; } .r5 { margin-left: 14px; }
.vt { font: 20px "Liberation Sans", sans-serif; color: #222; white-space: nowrap; padding-bottom: 1px; letter-spacing: -.02px; }
.vwin { margin-left: auto; display: flex; gap: 10px; padding-right: 7px; color: #000; }
.vwin svg { width: 15px; height: 15px; }

/* Menu and main tool bar */
.vhead { height: 73px; flex: none; display: flex; justify-content: space-between; background: linear-gradient(#ededed, #d5d5d5); border-bottom: 2px solid #b4b4b8; border-left: 1px solid #777; }
.menu { display: flex; padding-left: 21px; height: 36px; align-items: center; }
.menu u { text-underline-offset: 3px; }
.menu span { padding-top: 3px; font-size: 14.800px; letter-spacing: .3px; }
.i1 { width: 54px; } .i2 { width: 59px; } .i3 { width: 61px; } .i4 { width: 69px; } .i5 { width: 88px; } .i6 { width: 87px; } .i7 { width: 78px; } .i8 { width: 64px; } .i9 { width: 56px; }
.quick { border-left: 1px solid #bbb; padding-left: 14px; height: 29px; display: flex; align-items: center; color: #979797; font-size: 14px; letter-spacing: .15px; position: relative; top: -1px; }
.quick svg { margin-right: 5px; }
.quick::after { content: ""; position: absolute; left: 13px; top: 27px; width: 178px; height: 2px; background: #a5a5a5; }
.tools { display: flex; padding-left: 11px; height: 36px; align-items: center; }
.tools i { width: 43.5px; height: 24px; display: flex; align-items: center; justify-content: center; position: relative; }
.tools i svg { width: 18px; height: 18px; }
.cor { position: absolute; right: 9px; bottom: -3px; border: 3px solid transparent; border-right-color: #444; border-bottom-color: #444; }
.dash { margin-left: 36px; letter-spacing: .5px; padding-top: 1px; }
.dn { margin: 4px 0 0 8px; border: 5px solid transparent; border-top-color: #555; border-bottom: 0; }
.vright { width: 249px; display: flex; flex-direction: column; }
.stat { height: 37px; display: flex; align-items: center; justify-content: flex-end; gap: 18px; padding-right: 9px; letter-spacing: .14px; white-space: nowrap; }
.sel { width: 239px; height: 31px; margin-top: 1px; background: #fff; border: 1px solid #b5b5b5; display: flex; align-items: center; padding-left: 7px; gap: 8px; }
.sc { margin-left: auto; margin-right: 10px; color: #666; }

/* Work area */
.body { height: 757px; flex: none; display: flex; border-left: 1px solid #777; background: #fff; }
.c1 { width: 21px; padding-top: 1px; }
.vtab { border: 1.500px solid #b5b5b5; border-left: 0; border-radius: 0 6px 6px 0; display: flex; align-items: center; justify-content: center; white-space: nowrap; font-size: 14.800px; letter-spacing: .28px; color: #111; }
.vtab span { writing-mode: vertical-rl; transform: rotate(180deg); line-height: 18px; }
.flow { width: 20px; height: 248px; background: #f7f7f7; letter-spacing: .15px; }
.flow span { margin-left: 3px; }
.c2 { flex: 1; }
.hm { height: 33px; background: #cbddfe; display: flex; align-items: center; padding: 0 10px 2px 11px; font-size: 14.700px; }
.hm > b { color: #000; letter-spacing: .28px; }
.hm > span { letter-spacing: .27px; }
.hmr { margin-left: auto; display: flex; align-items: center; gap: 12px; color: #8a8a8a; font-size: 18px; }
.hmr svg { width: 14px; height: 14px; }
.hmbody { display: flex; height: 724px; }
.side { width: 38px; padding: 14px 0 0 5px; }
.side .vtab { width: 27px; }
.side span { margin-right: 4px; }
.hw { height: 102px; margin-bottom: 17px; padding-top: 16px; }
.icp { height: 175px; padding-top: 14px; }
.mainc { flex: 1; padding-top: 13px; }
.frame { width: 1849px; height: 677px; border: 4px solid #4a7ccf; background: #f7f7f7; }
.etabs { height: 33px; background: #ececec; display: flex; font-weight: 700; color: #8c8c8c; font-size: 15px; letter-spacing: .2px; }
.etabs div { height: 28px; border-right: 1px solid #c4c4c4; display: flex; align-items: center; justify-content: space-between; padding: 3px 6px 0 7px; white-space: nowrap; }
.etabs div.thick { border-right-width: 3px; }
.e1 { width: 125px; } .cur { width: 121px; } .e3 { width: 115px; } .e4 { width: 256px; } .e5 { width: 128px; } .e6 { width: 133px; } .e7 { width: 125px; }
.etabs div.cur { background: #fff; color: #000; height: 33px; padding-bottom: 5px; border: 0; }
.etabs div svg { width: 11px; height: 11px; margin-top: 2px; color: #909090; }
.etabs aside { margin-left: auto; display: flex; align-items: center; gap: 12px; padding: 0 11px 2px 0; font-size: 16px; }
.etabs aside svg { width: 13px; height: 13px; }
.fbody { display: flex; height: 636px; }
.do { width: 26px; padding-top: 2px; }
.dopt { width: 19px; height: 247px; background: #fdfdfd; letter-spacing: .5px; padding-top: 2px; }
.dopt span { margin-left: 2px; }
.side2 { width: 33px; padding-top: 13px; }
.side2 .vtab { width: 27px; background: #f4f4f4; }
.side2 span { margin-right: 5px; }
.s1, .s2 { height: 170px; }
.s1 { padding-top: 14px; }
.s2 { padding-top: 28px; }
.s3 { height: 211px; margin-top: 18px; padding-top: 13px; }
.s4 { height: 43px; border-bottom: 0; border-bottom-right-radius: 0; }
.s4 span { margin-top: 13px; }
.panels { padding-top: 12px; width: 1771px; }
.wf { border: 3px solid #80ec78; height: 378px; background: #fff; display: flex; flex-direction: column; }
.ph { height: 34px; background: #e6e6e6; display: flex; align-items: center; padding: 0 12px 3px 7px; font-size: 14.800px; color: #000; white-space: pre; flex: none; }
.ph b { letter-spacing: .22px; }
.ph a { color: #1f63f0; margin-left: 1px; }
.ph aside { margin-left: auto; display: flex; gap: 11px; align-items: center; color: #8c8c8c; font-size: 16.500px; }
.ph aside svg { width: 14px; height: 14px; }
.pt { height: 42px; flex: none; display: flex; align-items: center; background: #fff; border-bottom: 2px solid #e6e6e6; color: #30508a; }
.pt i { width: 43.750px; height: 25px; border-right: 1px solid #d8d8d8; display: flex; align-items: center; justify-content: center; }
.pt i svg, .pgear { width: 18px; height: 18px; }
.pt .off { color: #b8b8b8; }
.pgear { margin-left: auto; margin-right: 13px; }
.wbody { display: flex; height: 296px; }
.wleft { width: 348px; }
.ila { height: 33px; width: 342px; border: 1.500px solid #b5b5b5; padding: 7px 14px 0 15px; margin-bottom: 1px; font-size: 14.800px; line-height: 19px; }
.cols { display: flex; gap: 6px; }
.ncol { width: 187px; } .vcol { width: 150px; }
.ch { height: 36px; background: linear-gradient(#ededed, #dcdcde); border: 1px solid #b8b8b8; font-weight: 700; padding: 9px 18px 0; color: #000; line-height: 19px; letter-spacing: .15px; }
.blk { height: 208px; background: #000; color: #e4e4e4; padding-top: 1px; }
.nm { height: 226px; }
.blk hr { margin: 20px 0 0; border: 0; height: 1px; background: #ddd; }
.r { height: 27.500px; display: flex; align-items: center; padding-left: 8px; font-size: 14.800px; }
.top { padding-left: 10px; gap: 8px; color: #ddd; }
.ex { color: #888; }
.bi { width: 15px; height: 13px; }
.top .bi { margin-right: -3px; }
.r p { margin: 0 0 0 47px; height: 27px; width: 48px; display: flex; align-items: center; gap: 6px; padding-left: 2px; }
.r p svg { width: 15px; height: 16px; }
.r p.hl, .r.hl { background: #c8dafd; color: #333; }
.r.hl { margin: 0 5px; padding-left: 3px; border: 1px solid #57a0dd; }
.hs { height: 17px; background: #fafafa; display: flex; align-items: center; justify-content: space-between; color: #666; position: relative; padding: 0 1px 0 3px; }
.hs svg { width: 14px; height: 14px; }
.l { transform: rotate(90deg); } .rt { transform: rotate(-90deg); } .up { transform: rotate(180deg); }
.thumb { position: absolute; left: 295px; top: 4px; width: 65px; height: 10px; border-radius: 5px; background: #c0c0c0; }
.wright { width: 1416px; }
.wtop { display: flex; }
#wave { background: #000; font-family: "DejaVu Sans Mono", monospace; font-size: 14.560px; }
.vs { flex: 1; background: #fafafa; display: flex; flex-direction: column; justify-content: space-between; align-items: center; padding: 4px 0 1px 2px; color: #777; }
.vs svg { width: 14px; height: 14px; }

/* VIO panel */
.vio { margin-top: 17px; height: 218px; width: 1769px; border: 1.500px solid #ccc; border-width: 1px 2px 2px 2px; background: #fff; }
.vio .pt { padding-left: 1px; }
.vio .pt i { width: 43.700px; }
.tb { width: 494px; margin-left: 1px; }
.tr { display: grid; grid-template-columns: 118px 94px 88px 105px 88px; height: 27.500px; font-size: 14.800px; background: #fff; }
.tr span { border-right: 1px solid #ddd; border-bottom: 1px solid #ddd; padding: 0 8px; display: flex; align-items: center; white-space: nowrap; }
.th { background: #ececec; height: 27px; letter-spacing: .12px; box-shadow: 1271px 0 #ececec, 494px 0 #ececec, 988px 0 #ececec; }
.th span { border-bottom: 0; padding-left: 9px; }
.tr:not(.th) span { padding-left: 9px; padding-bottom: 4px; }
.tr:not(.th) span:first-child { padding-left: 29px; gap: 8px; }
.tr span svg { width: 15px; height: 16px; margin-top: 3px; }
.dd { margin-left: auto; margin-right: 1px; border: 4.500px solid transparent; border-top: 6px solid #555; border-bottom: 0; }
.btabs { display: flex; padding-top: 5px; margin-left: 1px; }
.btabs span { width: 139px; height: 29px; border: 1.500px solid #b5b5b5; border-bottom: 0; border-radius: 5px 5px 0 0; padding: 5px 8px 0 9px; font-size: 14.600px; letter-spacing: .1px; white-space: nowrap; background: #fff; }
.foot { height: 21px; flex: none; background: #eee; border-left: 1px solid #777; }

/* Windows task bar */
.task { height: 60px; flex: none; background: #122a30; display: flex; color: #fff; font-family: "Open Sans", sans-serif; }
.wid { width: 548px; padding: 16px 0 0 21px; }
.apps { display: flex; }
.apps i { width: 55.060px; height: 60px; display: flex; align-items: center; justify-content: center; position: relative; }
.apps svg { width: 30px; height: 30px; }
.apps b { position: absolute; left: 24px; bottom: 6px; width: 8px; height: 4px; border-radius: 2px; background: #8f9b9e; }
.apps .act::before { content: ""; position: absolute; left: 3px; top: 5px; width: 49px; height: 50px; border-radius: 5px; background: #192f35; border: 1px solid #2c4147; }
.apps .act::after { content: ""; position: absolute; left: 3px; top: 5px; width: 44px; height: 50px; border-radius: 5px; background: #22383e; border: 1px solid #2c4147; }
.act svg { position: relative; z-index: 1; }
.apps .act b { left: 18px; width: 20px; background: #9cc7cf; z-index: 1; }
.tray { margin-left: auto; display: flex; align-items: center; padding-right: 25px; font-size: 15px; line-height: 20px; letter-spacing: -.1px; }
.t2 { margin-left: 12px; }
.lang { width: 40px; margin-left: 13px; text-align: center; }
.t3 { margin-left: 17px; } .t4 { margin-left: 9px; } .t5 { margin-left: 10px; }
.clock { width: 94px; text-align: right; }
.t6 { margin-left: 12px; }
```

FILE: wave.js
```js
// Draws the ILA capture: time ruler, bus value lane and four one-hot bit lanes.
(function () {
  var X0 = 4, STEP = 25, COUNT = 56, W = 1397;
  var out = [];
  function line(x1, y1, x2, y2, c) {
    out.push('<path d="M' + x1 + ' ' + y1 + 'L' + x2 + ' ' + y2 + '" stroke="' + c + '" fill="none"/>');
  }
  function text(x, y, s, c) {
    out.push('<text x="' + x + '" y="' + y + '" fill="' + c + '">' + s + '</text>');
  }
  line(X0, 70.5, W, 70.5, '#bdbdbd');
  line(X0, 228.5, W, 228.5, '#9a9a9a');
  for (var i = 0; i < COUNT; i++) {
    var x = X0 + i * STEP;
    if (i % 5 === 0) {
      line(x, 50, x, 70, '#d8d8d8');
      line(x, 70, x, 228, '#a8a8a8');
      text(x + 2.500, 57.5, 205 + i, '#d4d4d4');
    } else {
      line(x, 65, x, 70, '#d8d8d8');
    }
  }
  for (i = 0; i < COUNT; i++) {
    var l = X0 + i * STEP, r = l + STEP;
    out.push('<path d="M' + l + ' 86L' + (l + 6) + ' 76.500H' + (r - 6) + 'L' + r + ' 86L' + (r - 6) + ' 96.500H' + (l + 6) + 'Z" fill="none" stroke="#00a800" stroke-width="1.300"/>');
    text(l + 7, 88, 1 << (i % 4), '#d4d4d4');
  }
  for (var bit = 0; bit < 4; bit++) {
    var lo = 206.500 - bit * 27.500, hi = lo - 20, d = 'M' + X0 + ' ' + lo;
    for (i = 0; i < COUNT; i++) {
      var a = X0 + i * STEP;
      if (i % 4 === bit) {
        out.push('<rect x="' + a + '" y="' + hi + '" width="25" height="20" fill="#003d00"/>');
        d += 'H' + a + 'V' + hi + 'H' + (a + STEP) + 'V' + lo;
      }
    }
    out.push('<path d="' + d + 'H' + W + '" fill="none" stroke="#00a800" stroke-width="1.400"/>');
  }
  out.push('<rect x="227.500" y="0" width="2" height="228" fill="#c8c800"/>');
  out.push('<rect x="228" y="0.500" width="31" height="19.500" fill="#c8c800" stroke="#ddd"/>');
  text(230, 14.500, '214', '#111');
  text(6, 271.500, 'Updated at: 2022-Aug-19 01:02:18', '#eee');
  document.getElementById('wave').innerHTML = out.join('');
})();
```
